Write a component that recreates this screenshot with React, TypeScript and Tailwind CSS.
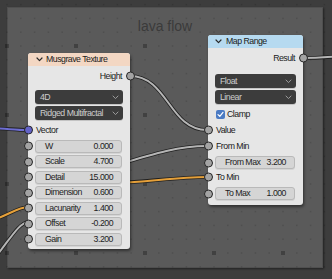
import React from "react";

const txt = "font-['Liberation_Sans',Arial,sans-serif] text-[8.75px] tracking-[-0.5px] leading-none";

function Socket({ side, blue }: { side: "l" | "r"; blue?: boolean }) {
  const pos = side === "l" ? "-left-[4.5px]" : "-right-[4.5px]";
  const col = blue ? "bg-[#6363c7]" : "bg-[#a3a3a3]";
  return (
    <span
      className={`absolute top-1/2 -translate-y-1/2 ${pos} w-[9px] h-[9px] rounded-full border border-[#262626] ${col}`}
    />
  );
}

function Chevron({ dark }: { dark?: boolean }) {
  return (
    <svg width="7" height="5" viewBox="0 0 7 5" className="shrink-0">
      <path
        d="M1 1 L3.5 3.6 L6 1"
        fill="none"
        stroke={dark ? "#2a2a2a" : "#9a9a9a"}
        strokeWidth={dark ? 1.2 : 1}
        strokeLinecap="round"
        strokeLinejoin="round"
      />
    </svg>
  );
}

function Dropdown({ label }: { label: string }) {
  return (
    <div className="h-[14px] rounded-[3px] bg-[#3c3c3c] flex items-center justify-between pl-[5px] pr-[4px] shadow-[0_1px_0_rgba(0,0,0,0.15)]">
      <span className={`${txt} text-[#cdcdcd]`}>{label}</span>
      <Chevron />
    </div>
  );
}

function Field({ label, value }: { label: string; value: string }) {
  return (
    <div className="h-[13px] rounded-[3px] bg-[#d5d5d5] border border-[#b9b9b9] flex items-center justify-between pl-[9px] pr-[8px] shadow-[0_1px_0_rgba(0,0,0,0.08)]">
      <span className={`${txt} text-[#1e1e1e]`}>{label}</span>
      <span className={`${txt} text-[#1e1e1e]`}>{value}</span>
    </div>
  );
}

function Grid() {
  const xs: number[] = [];
  const ys: number[] = [];
  for (let i = -1; i < 26; i++) xs.push(7 + 13.8 * i);
  for (let j = -1; j < 22; j++) ys.push(4.6 + 13.8 * j);
  const dots: React.ReactNode[] = [];
  xs.forEach((x, i) =>
    ys.forEach((y, j) => {
      const big = (i - 1) % 5 === 0 && (j - 4) % 5 === 0;
      dots.push(
        big ? (
          <rect key={`${i}-${j}`} x={x - 2} y={y - 2} width={4} height={4} fill="rgba(0,0,0,0.28)" />
        ) : (
          <rect key={`${i}-${j}`} x={x - 0.75} y={y - 0.75} width={1.5} height={1.5} fill="rgba(0,0,0,0.12)" />
        )
      );
    })
  );
  return (
    <svg className="absolute inset-0 pointer-events-none" width="332" height="279">
      {dots}
    </svg>
  );
}

function Wire({ d, color }: { d: string; color: string }) {
  return (
    <g>
      <path d={d} fill="none" stroke="#1f1f1f" strokeWidth="3.6" strokeLinecap="round" />
      <path d={d} fill="none" stroke={color} strokeWidth="2" strokeLinecap="round" />
    </g>
  );
}

function Wires() {
  return (
    <svg className="absolute inset-0 pointer-events-none" width="332" height="279">
      <Wire d="M-20,128 C5,128 12,130 28,130" color="#6d6dd2" />
      <Wire d="M-8,220 C5,217 18,207 28,207" color="#e5a03a" />
      <Wire d="M-8,261 C8,243 18,223 28,222" color="#b5b5b5" />
      <Wire d="M100,170 C150,155 175,146 207,146" color="#b5b5b5" />
      <Wire d="M100,184 C150,182 175,177 207,177" color="#e5a03a" />
      <Wire d="M130,76 C168,76 169,130 207,130" color="#b5b5b5" />
      <Wire d="M303,58 C318,58 328,57 345,56" color="#b5b5b5" />
    </svg>
  );
}

function Musgrave() {
  return (
    <div className="absolute left-[28px] top-[53px] w-[102px] h-[196px] rounded-[3px] bg-[#e6e6e6] shadow-[1px_2px_3px_rgba(0,0,0,0.45)] flex flex-col">
      <div className="h-[13px] rounded-t-[3px] bg-[#f3d7c3] flex items-center pl-[8px] gap-[3px]">
        <Chevron dark />
        <span className={`${txt} text-[#1a1a1a]`}>Musgrave Texture</span>
      </div>
      <div className="relative mt-[3px] h-[14px] flex items-center justify-end pr-[8px]">
        <span className={`${txt} text-[#1a1a1a]`}>Height</span>
        <Socket side="r" />
      </div>
      <div className="mt-[7px] ml-[7px] mr-[7px] flex flex-col gap-[2px]">
        <Dropdown label="4D" />
        <Dropdown label="Ridged Multifractal" />
      </div>
      <div className="relative mt-[3px] h-[14px] flex items-center pl-[8px]">
        <span className={`${txt} text-[#1a1a1a]`}>Vector</span>
        <Socket side="l" blue />
      </div>
      <div className="mt-[2.5px] flex flex-col gap-[2.5px]">
        {[
          ["W", "0.000"],
          ["Scale", "4.700"],
          ["Detail", "15.000"],
          ["Dimension", "0.600"],
          ["Lacunarity", "1.400"],
          ["Offset", "-0.200"],
          ["Gain", "3.200"],
        ].map(([l, v]) => (
          <div key={l} className="relative pl-[7px] pr-[8px]">
            <Field label={l} value={v} />
            <Socket side="l" />
          </div>
        ))}
      </div>
    </div>
  );
}

function MapRange() {
  return (
    <div className="absolute left-[208px] top-[35px] w-[95px] h-[170px] rounded-[3px] bg-[#e6e6e6] shadow-[1px_2px_3px_rgba(0,0,0,0.45)] flex flex-col">
      <div className="h-[13px] rounded-t-[3px] bg-[#b6daf0] flex items-center pl-[7px] gap-[4px]">
        <Chevron dark />
        <span className={`${txt} text-[#1a1a1a]`}>Map Range</span>
      </div>
      <div className="relative mt-[3px] h-[14px] flex items-center justify-end pr-[8px]">
        <span className={`${txt} text-[#1a1a1a]`}>Result</span>
        <Socket side="r" />
      </div>
      <div className="mt-[9px] ml-[7px] mr-[7px] flex flex-col gap-[2px]">
        <Dropdown label="Float" />
        <Dropdown label="Linear" />
      </div>
      <div className="mt-[3px] h-[14px] flex items-center pl-[8px] gap-[2px]">
        <span className="w-[9px] h-[9px] rounded-[2px] bg-[#4b7bc4] flex items-center justify-center">
          <svg width="7" height="7" viewBox="0 0 7 7">
            <path d="M1 3.6 L2.8 5.3 L6 1.4" fill="none" stroke="#ffffff" strokeWidth="1.2" strokeLinecap="round" strokeLinejoin="round" />
          </svg>
        </span>
        <span className={`${txt} text-[#1a1a1a]`}>Clamp</span>
      </div>
      <div className="relative mt-[2px] h-[14px] flex items-center pl-[8px]">
        <span className={`${txt} text-[#1a1a1a]`}>Value</span>
        <Socket side="l" />
      </div>
      <div className="relative mt-[2px] h-[14px] flex items-center pl-[8px]">
        <span className={`${txt} text-[#1a1a1a]`}>From Min</span>
        <Socket side="l" />
      </div>
      <div className="relative mt-[3px] pl-[7px] pr-[8px]">
        <Field label="From Max" value="3.200" />
        <Socket side="l" />
      </div>
      <div className="relative mt-[1px] h-[14px] flex items-center pl-[8px]">
        <span className={`${txt} text-[#1a1a1a]`}>To Min</span>
        <Socket side="l" />
      </div>
      <div className="relative mt-[3px] pl-[7px] pr-[8px]">
        <Field label="To Max" value="1.000" />
        <Socket side="l" />
      </div>
    </div>
  );
}

export default function App() {
  return (
    <div className="relative w-[332px] h-[279px] overflow-hidden bg-[#3d3d3d]">
      <div className="absolute left-[7px] top-[7px] w-[316px] h-[261px] bg-[#5a5a5a] border border-[#4f4f4f] shadow-[1px_1px_2px_rgba(0,0,0,0.45)]">
        <div className="pt-[10px] text-center font-['Liberation_Sans',Arial,sans-serif] text-[14px] leading-[16px] text-[#3b3b3b]">
          lava flow
        </div>
      </div>
      <Grid />
      <Wires />
      <Musgrave />
      <MapRange />
    </div>
  );
}
